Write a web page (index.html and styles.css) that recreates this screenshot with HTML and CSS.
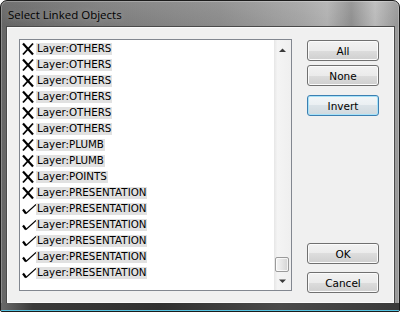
FILE: index.html
```html
<!DOCTYPE html>
<html lang="en">
<head>
  <meta charset="UTF-8">
  <title>Select Linked Objects</title>
  <link rel="stylesheet" href="styles.css">
</head>
<body>

  <svg width="0" height="0" class="defs">
    <symbol id="cross" viewBox="0 0 14 14">
      <path d="M1 1.5L11 12.5" stroke="#000" stroke-width="2.2" fill="none"/>
      <path d="M11 1.5L1 12.5" stroke="#000" stroke-width="1.8" fill="none"/>
    </symbol>
    <symbol id="tick" viewBox="0 0 14 14">
      <path d="M1 7.5L4 11.5" stroke="#000" stroke-width="2.2" fill="none"/>
      <path d="M4 11.5L14 2.5" stroke="#000" stroke-width="1.1" fill="none"/>
    </symbol>
  </svg>

  <div class="window">
    <div class="titlebar"><span class="title">Select Linked Objects</span></div>

    <div class="client">
      <!-- LIST -->
      <div class="listbox">
        <ul class="items">
          <li class="item"><svg class="mark"><use href="#cross"/></svg><span class="label">Layer:OTHERS</span></li>
          <li class="item"><svg class="mark"><use href="#cross"/></svg><span class="label">Layer:OTHERS</span></li>
          <li class="item"><svg class="mark"><use href="#cross"/></svg><span class="label">Layer:OTHERS</span></li>
          <li class="item"><svg class="mark"><use href="#cross"/></svg><span class="label">Layer:OTHERS</span></li>
          <li class="item"><svg class="mark"><use href="#cross"/></svg><span class="label">Layer:OTHERS</span></li>
          <li class="item"><svg class="mark"><use href="#cross"/></svg><span class="label">Layer:OTHERS</span></li>
          <li class="item"><svg class="mark"><use href="#cross"/></svg><span class="label">Layer:PLUMB</span></li>
          <li class="item"><svg class="mark"><use href="#cross"/></svg><span class="label">Layer:PLUMB</span></li>
          <li class="item"><svg class="mark"><use href="#cross"/></svg><span class="label">Layer:POINTS</span></li>
          <li class="item"><svg class="mark"><use href="#cross"/></svg><span class="label">Layer:PRESENTATION</span></li>
          <li class="item"><svg class="mark"><use href="#tick"/></svg><span class="label">Layer:PRESENTATION</span></li>
          <li class="item"><svg class="mark"><use href="#tick"/></svg><span class="label">Layer:PRESENTATION</span></li>
          <li class="item"><svg class="mark"><use href="#tick"/></svg><span class="label">Layer:PRESENTATION</span></li>
          <li class="item"><svg class="mark"><use href="#tick"/></svg><span class="label">Layer:PRESENTATION</span></li>
          <li class="item"><svg class="mark"><use href="#tick"/></svg><span class="label">Layer:PRESENTATION</span></li>
        </ul>
        <div class="scrollbar">
          <div class="sb-btn"><svg width="17" height="17"><path d="M5 12L12 12L8.5 8.5Z" fill="#3a3a3a"/></svg></div>
          <div class="sb-track"><div class="sb-thumb"></div></div>
          <div class="sb-btn"><svg width="17" height="17"><path d="M5 6.5L12 6.5L8.5 10Z" fill="#3a3a3a"/></svg></div>
        </div>
      </div>

      <!-- BUTTONS -->
      <div class="buttons">
        <button class="btn">All</button>
        <button class="btn btn-none">None</button>
        <button class="btn btn-focus">Invert</button>
        <button class="btn btn-ok">OK</button>
        <button class="btn btn-cancel">Cancel</button>
      </div>
    </div>

    <div class="frame-bottom"></div>
  </div>

</body>
</html>
```

FILE: styles.css
```css
/* BASE */
* { margin: 0; padding: 0; box-sizing: border-box; }
body { background: #fff; font-family: "DejaVu Sans", sans-serif; font-size: 10.3px; color: #000; }
.defs { position: absolute; }

/* WINDOW FRAME */
.window {
  width: 400px;
  height: 312px;
  border: 1px solid #1c1c1c;
  border-radius: 7px 7px 2px 2px;
  background: linear-gradient(to right, #666 0%, #7c7c7c 25%, #8c8c8c 55%, #a6a6a6 76%, #b2b2b2 82%, #909090 88%, #bcbcbc 94%, #969696 100%);
  box-shadow: inset 0 0 0 1px rgba(255,255,255,0.25);
  display: flex;
  flex-direction: column;
  overflow: hidden;
}
.titlebar {
  height: 26px;
  flex: none;
  display: flex;
  align-items: center;
  padding-left: 7px;
  background: linear-gradient(rgba(255,255,255,0.08), rgba(0,0,0,0.02));
}
.title {
  font-family: "Open Sans", sans-serif;
  font-size: 11.5px;
  color: #000;
  text-shadow: 0 0 6px rgba(255,255,255,0.35);
}

.client {
  flex: 1;
  margin: 0 5px 0 6px;
  background: #f0f0f0;
  box-shadow: 0 0 0 1px #4a4a4a, inset 0 0 0 1px #fafafa;
  display: flex;
  align-items: flex-start;
  padding: 12px 15px 0 12px;
}

.frame-bottom {
  height: 8px;
  flex: none;
  background: linear-gradient(to right, #6a6a6a, #3a3a3a 8%, #303030 40%, #4a4a4a 70%, #3a3a3a);
  border-bottom: 1px solid #56c4e2;
}

/* LISTBOX */
.listbox {
  width: 273px;
  height: 252px;
  border: 1px solid #828790;
  background: #fff;
  display: flex;
}
.items {
  flex: 1;
  list-style: none;
  padding: 1px 0 0 2px;
  overflow: hidden;
}
.item {
  display: flex;
  height: 16px;
}
.mark {
  width: 14px;
  height: 14px;
  margin-top: 1px;
  flex: none;
}
.label {
  margin-top: 2px;
  height: 12px;
  line-height: 11px;
  padding: 0 1px;
  background: #e1e1e1;
  white-space: nowrap;
}

/* SCROLLBAR */
.scrollbar {
  width: 17px;
  flex: none;
  display: flex;
  flex-direction: column;
  background: linear-gradient(to right, #e6e6e6, #f4f4f4 20%, #efefef);
}
.sb-btn { height: 17px; flex: none; }
.sb-btn svg { display: block; }
.sb-track {
  flex: 1;
  display: flex;
  flex-direction: column;
  justify-content: flex-end;
  padding-bottom: 1px;
}
.sb-thumb {
  width: 14px;
  height: 15px;
  margin-left: 1px;
  border: 1px solid #9a9a9a;
  border-radius: 2px;
  background: linear-gradient(to right, #f4f4f4, #e6e6e6 50%, #d4d4d4);
  box-shadow: inset 0 0 0 1px rgba(255,255,255,0.7);
}

/* BUTTONS */
.buttons {
  width: 72px;
  height: 253px;
  margin-left: 15px;
  margin-top: 1px;
  display: flex;
  flex-direction: column;
}
.btn {
  height: 21px;
  flex: none;
  font-family: "DejaVu Sans", sans-serif;
  font-size: 10.5px;
  color: #000;
  border: 1px solid #707070;
  border-radius: 3px;
  background: linear-gradient(#f2f2f2 0%, #ebebeb 50%, #dddddd 50%, #cfcfcf 100%);
  box-shadow: inset 0 0 0 1px #fbfbfb;
}
.btn-none { margin-top: 4px; }
.btn-focus {
  margin-top: 9px;
  border-color: #3c7fb1;
  box-shadow: inset 0 0 0 1px #a7e2f9;
  background: linear-gradient(#f2f6f8 0%, #eaeff2 50%, #dbe3e8 50%, #d0d9de 100%);
}
.btn-ok { margin-top: auto; }
.btn-cancel { margin-top: 8px; }
```
